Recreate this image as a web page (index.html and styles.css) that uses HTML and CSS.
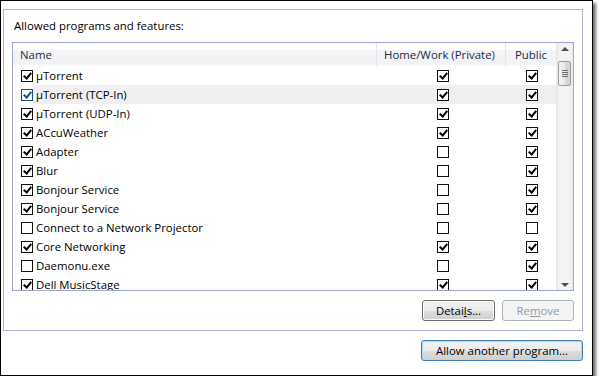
FILE: index.html
```html
<!DOCTYPE html>
<html lang="en">
<head>
    <meta charset="UTF-8">
    <title>Allowed programs and features</title>
    <link rel="stylesheet" href="styles.css">
</head>
<body>
    <div class="window">
        <!-- Allowed programs group -->
        <div class="group">
            <div class="group-label">Allowed programs and features:</div>
            <div class="list">
                <div class="list-main">
                    <div class="list-head">
                        <div class="hcell hname">Name</div>
                        <div class="hcell hhome">Home/Work (Private)</div>
                        <div class="hcell hpublic">Public</div>
                    </div>
                    <div class="list-body">
                        <div class="row">
                            <span class="cb on"></span>
                            <div class="cells"><span class="name">µTorrent</span><span class="col home"><span class="cb on"></span></span><span class="col public"><span class="cb on"></span></span></div>
                        </div>
                        <div class="row hot">
                            <span class="cb on"></span>
                            <div class="cells"><span class="name">µTorrent (TCP-In)</span><span class="col home"><span class="cb on"></span></span><span class="col public"><span class="cb on"></span></span></div>
                        </div>
                        <div class="row">
                            <span class="cb on"></span>
                            <div class="cells"><span class="name">µTorrent (UDP-In)</span><span class="col home"><span class="cb on"></span></span><span class="col public"><span class="cb on"></span></span></div>
                        </div>
                        <div class="row">
                            <span class="cb on"></span>
                            <div class="cells"><span class="name">ACcuWeather</span><span class="col home"><span class="cb on"></span></span><span class="col public"><span class="cb on"></span></span></div>
                        </div>
                        <div class="row">
                            <span class="cb on"></span>
                            <div class="cells"><span class="name">Adapter</span><span class="col home"><span class="cb"></span></span><span class="col public"><span class="cb on"></span></span></div>
                        </div>
                        <div class="row">
                            <span class="cb on"></span>
                            <div class="cells"><span class="name">Blur</span><span class="col home"><span class="cb"></span></span><span class="col public"><span class="cb on"></span></span></div>
                        </div>
                        <div class="row">
                            <span class="cb on"></span>
                            <div class="cells"><span class="name">Bonjour Service</span><span class="col home"><span class="cb"></span></span><span class="col public"><span class="cb on"></span></span></div>
                        </div>
                        <div class="row">
                            <span class="cb on"></span>
                            <div class="cells"><span class="name">Bonjour Service</span><span class="col home"><span class="cb"></span></span><span class="col public"><span class="cb on"></span></span></div>
                        </div>
                        <div class="row">
                            <span class="cb"></span>
                            <div class="cells"><span class="name">Connect to a Network Projector</span><span class="col home"><span class="cb"></span></span><span class="col public"><span class="cb"></span></span></div>
                        </div>
                        <div class="row">
                            <span class="cb on"></span>
                            <div class="cells"><span class="name">Core Networking</span><span class="col home"><span class="cb on"></span></span><span class="col public"><span class="cb on"></span></span></div>
                        </div>
                        <div class="row">
                            <span class="cb"></span>
                            <div class="cells"><span class="name">Daemonu.exe</span><span class="col home"><span class="cb"></span></span><span class="col public"><span class="cb on"></span></span></div>
                        </div>
                        <div class="row">
                            <span class="cb on"></span>
                            <div class="cells"><span class="name">Dell MusicStage</span><span class="col home"><span class="cb on"></span></span><span class="col public"><span class="cb on"></span></span></div>
                        </div>
                    </div>
                </div>
                <!-- Vertical scrollbar -->
                <div class="scrollbar">
                    <div class="sb-btn"><span class="arrow up"></span></div>
                    <div class="track"><div class="thumb"><span class="grip"></span></div></div>
                    <div class="sb-btn"><span class="arrow down"></span></div>
                </div>
            </div>
            <div class="group-buttons">
                <button class="btn details">Detai<u>l</u>s...</button>
                <button class="btn remove" disabled>Re<u>m</u>ove</button>
            </div>
        </div>
        <div class="window-buttons">
            <button class="btn default">Allow another program...</button>
        </div>
    </div>
</body>
</html>
```

FILE: styles.css
```css
/* Base */
body {
    margin: 0;
    font-family: "Open Sans", "Noto Sans", sans-serif;
    font-size: 11.4px;
    color: #000;
    background: #fff;
}

/* Window frame */
.window {
    width: 591px;
    height: 374px;
    border: 1px solid #000;
    background: #fff;
    box-shadow: 3px 3px 3px rgba(0, 0, 0, 0.55);
}

/* Group box */
.group {
    margin: 8px 0 0 2px;
    width: 580px;
    box-sizing: border-box;
    border: 1px solid #aeb3dc;
    padding: 0 8px 9px 8px;
}

.group-label {
    padding: 8px 0 0 2px;
    line-height: 15px;
    margin-bottom: 9px;
}

/* List view */
.list {
    display: flex;
    height: 249px;
    box-sizing: border-box;
    border: 1px solid #9fa6d6;
}

.list-main {
    flex: 1;
    overflow: hidden;
}

.list-head {
    display: flex;
    height: 23px;
    background: linear-gradient(#ffffff 0%, #ffffff 30%, #f4f5f7 32%, #f1f2f4 90%, #fcfcfc 100%);
    color: #1e2a44;
}

.hcell {
    display: flex;
    align-items: center;
    box-sizing: border-box;
    white-space: nowrap;
}

.hname {
    width: 363px;
    padding-left: 7px;
}

.hhome {
    width: 129px;
    padding-left: 7px;
    border-left: 1px solid #e2e5ea;
}

.hpublic {
    width: 51px;
    padding-left: 9px;
    border-left: 1px solid #e2e5ea;
}

.list-body {
    height: 224px;
    overflow: hidden;
}

.row {
    display: flex;
    align-items: center;
    height: 19px;
    padding-left: 8px;
}

.cells {
    flex: 1;
    display: flex;
    align-items: center;
    align-self: stretch;
}

.row.hot .cells {
    background: #efefef;
}

.name {
    width: 343px;
    box-sizing: border-box;
    padding-left: 3px;
    white-space: nowrap;
}

.col {
    display: flex;
    justify-content: center;
    box-sizing: border-box;
}

.col.home {
    width: 129px;
    padding-left: 4px;
}

.col.public {
    width: 51px;
    padding-left: 3px;
}

/* Checkboxes */
.cb {
    display: inline-block;
    position: relative;
    width: 12px;
    height: 12px;
    box-sizing: border-box;
    border: 1px solid #111;
    background: #fff;
    flex-shrink: 0;
}

.cb.on::after {
    content: "";
    position: absolute;
    left: 3px;
    top: 0px;
    width: 3px;
    height: 6px;
    border: solid #000;
    border-width: 0 2px 2px 0;
    transform: rotate(40deg);
}

.row.hot > .cb {
    border-color: #1c4e8a;
}

.row.hot > .cb::after {
    border-color: #1c4e8a;
}

/* Scrollbar */
.scrollbar {
    width: 17px;
    display: flex;
    flex-direction: column;
    background: linear-gradient(90deg, #e6e6e6 0%, #f3f3f3 20%, #f3f3f3 80%, #e9e9e9 100%);
}

.sb-btn {
    height: 17px;
    display: flex;
    align-items: center;
    justify-content: center;
}

.arrow {
    width: 0;
    height: 0;
    border-left: 4px solid transparent;
    border-right: 4px solid transparent;
}

.arrow.up {
    border-bottom: 4px solid #4f4f4f;
    margin-top: -6px;
}

.arrow.down {
    border-top: 4px solid #4f4f4f;
    margin-top: 6px;
}

.track {
    flex: 1;
}

.thumb {
    margin: 1px 0 0 2px;
    width: 13px;
    height: 25px;
    box-sizing: border-box;
    border: 1px solid #9a9a9a;
    border-radius: 2px;
    background: linear-gradient(90deg, #f3f3f3 0%, #eaeaea 50%, #d9d9d9 51%, #d4d4d4 100%);
    display: flex;
    align-items: center;
    justify-content: center;
}

.grip {
    width: 6px;
    height: 7px;
    background: repeating-linear-gradient(#6f6f6f 0, #6f6f6f 1px, transparent 1px, transparent 2px);
}

/* Buttons */
.group-buttons {
    display: flex;
    justify-content: flex-end;
    gap: 7px;
    margin-top: 9px;
}

.btn {
    height: 21px;
    padding: 0;
    font-family: inherit;
    font-size: 11.4px;
    color: #000;
    border: 1px solid #707070;
    border-radius: 3px;
    background: linear-gradient(#f2f2f2 0%, #ebebeb 50%, #dddddd 51%, #cfcfcf 100%);
    box-shadow: inset 0 0 0 1px #fbfbfb;
}

.btn.details {
    width: 73px;
}

.btn.remove {
    width: 72px;
    color: #8f9aa3;
    border-color: #adb2b5;
    background: #f4f4f4;
    box-shadow: none;
}

.window-buttons {
    display: flex;
    justify-content: flex-end;
    padding: 9px 9px 0 0;
}

.btn.default {
    width: 162px;
    border-color: #3c7fb1;
    box-shadow: inset 0 0 0 1px #a9dcf5;
}
```
